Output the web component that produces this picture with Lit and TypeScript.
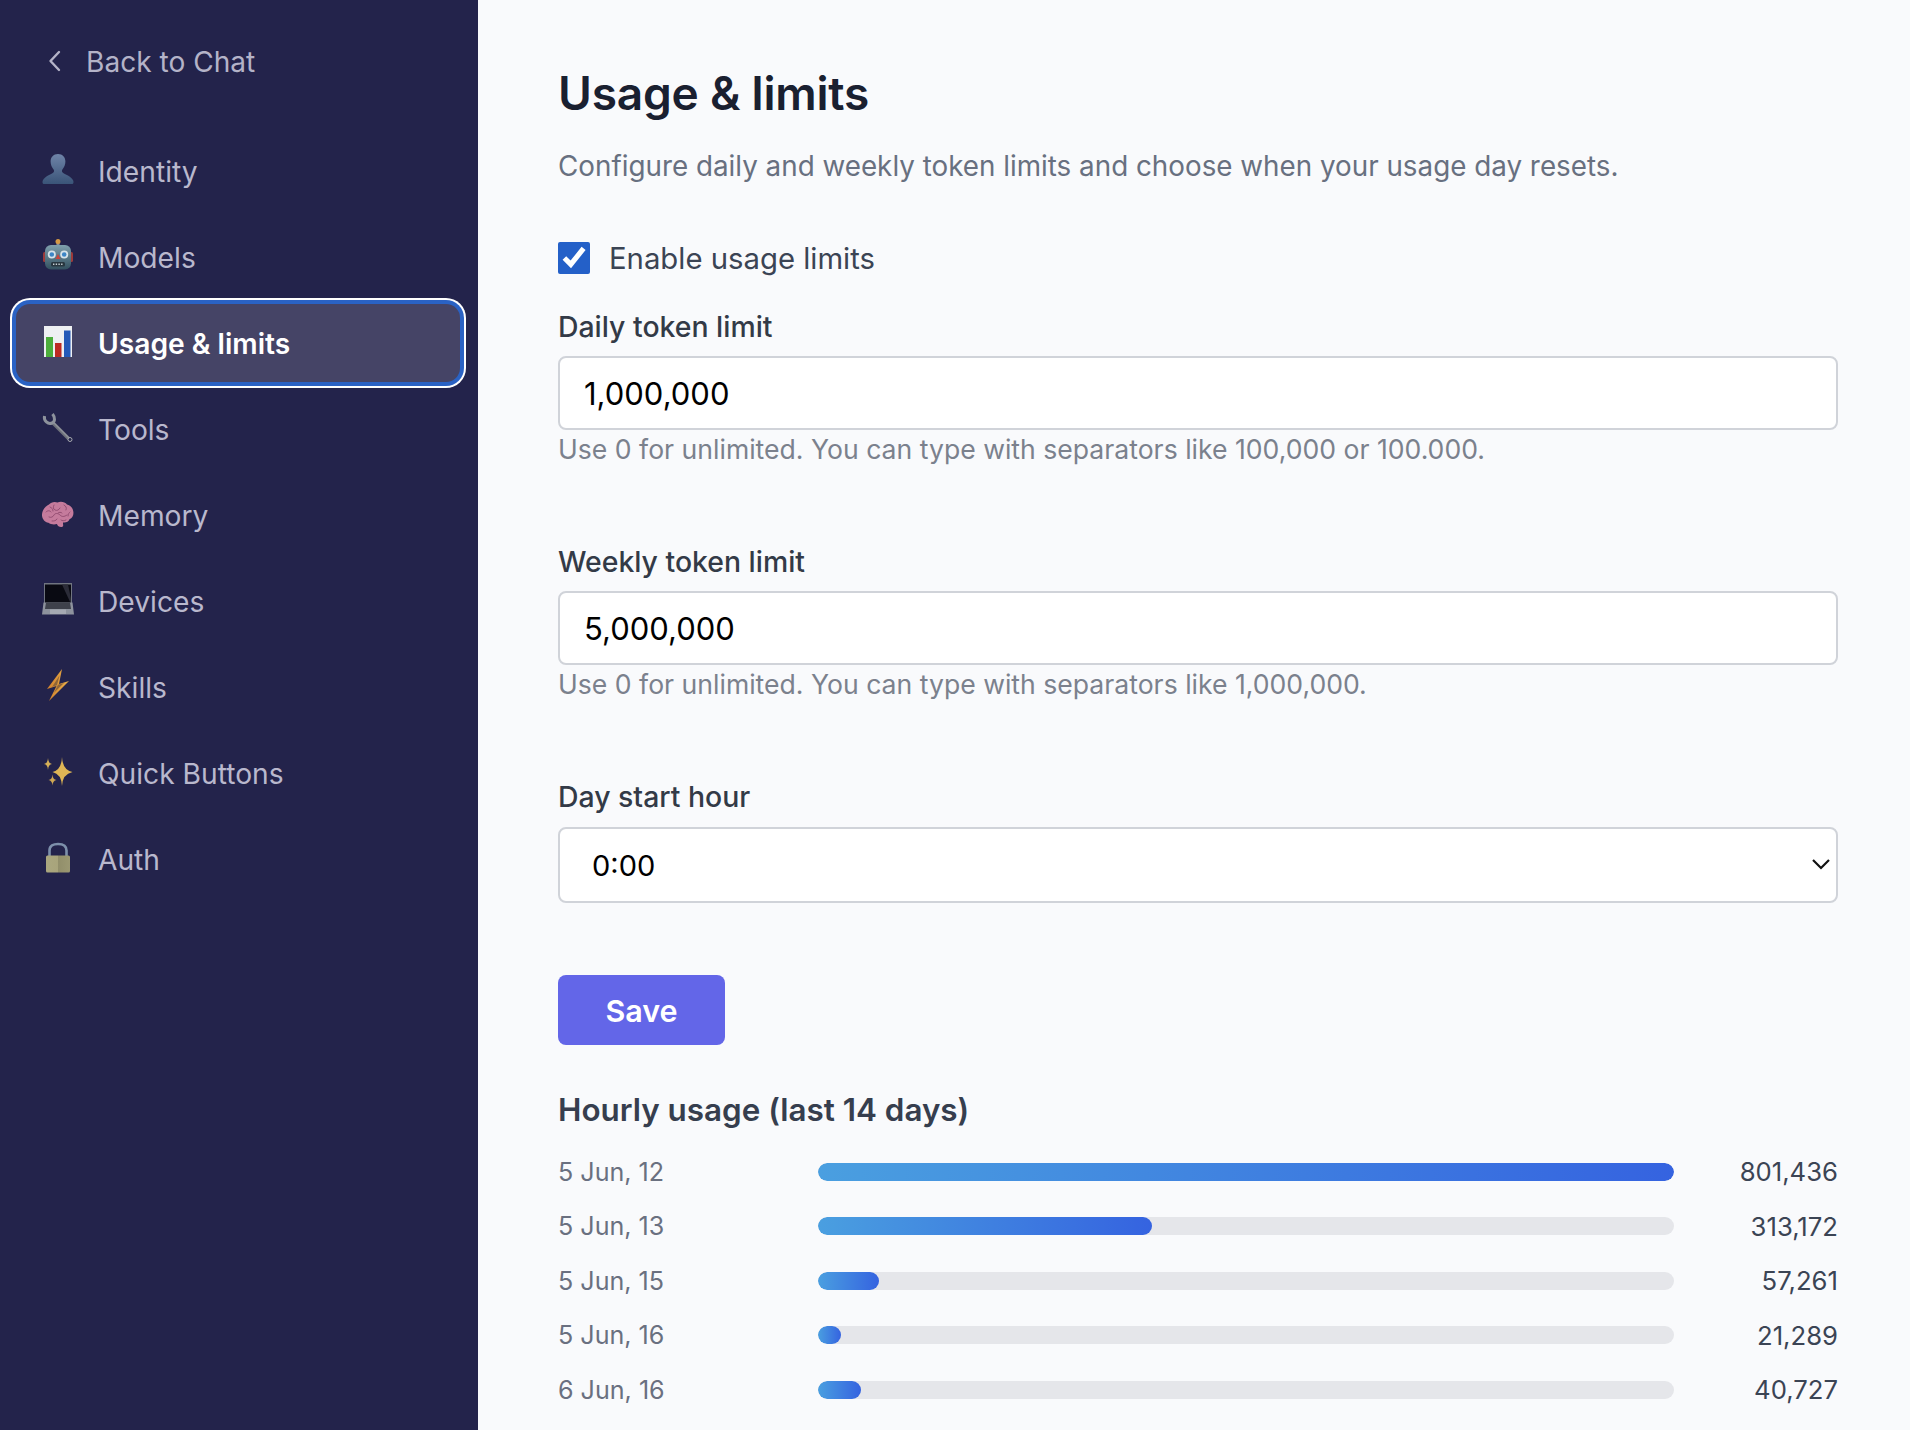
import { LitElement, html, css, svg } from "lit";
import { customElement, state } from "lit/decorators.js";

const icons: Record<string, unknown> = {
  identity: svg`<defs><linearGradient id="bust" x1="0" y1="0" x2="0" y2="1"><stop offset="0" stop-color="#6f84a8"/><stop offset="1" stop-color="#3a5478"/></linearGradient></defs>
    <path fill="url(#bust)" d="M16 1c-4.600 0-7.400 3.300-7.400 7.600 0 3.200 1.300 6 3 7.900.6.700.7 2.200-.2 3C9.300 21.300 2.800 23.300.8 27.500c-.5 1.200-.4 3.500.7 3.500h29c1.100 0 1.200-2.300.7-3.500-2-4.200-8.500-6.200-10.600-8-.9-.8-.8-2.300-.2-3 1.700-1.900 3-4.700 3-7.900C23.400 4.300 20.600 1 16 1z"/>`,
  robot: svg`<defs><linearGradient id="rb" x1="0" y1="0" x2="0" y2="1"><stop offset="0" stop-color="#7fa0ad"/><stop offset="1" stop-color="#33505f"/></linearGradient></defs>
    <rect x="14.500" y="3" width="3" height="4" fill="#8a8f96"/><circle cx="16" cy="2.500" r="2.500" fill="#d69a45"/>
    <rect x="1" y="13" width="4" height="10" rx="1.500" fill="#9c3a3a"/><rect x="27" y="13" width="4" height="10" rx="1.500" fill="#9c3a3a"/>
    <rect x="3" y="6" width="26" height="24.500" rx="6" fill="url(#rb)"/>
    <circle cx="9.800" cy="15.500" r="4" fill="#d8e4ea"/><circle cx="9.800" cy="15.500" r="2.300" fill="#3d86c6"/>
    <circle cx="22.200" cy="15.500" r="4" fill="#d8e4ea"/><circle cx="22.200" cy="15.500" r="2.300" fill="#3d86c6"/>
    <path d="M16 15l2.500 5h-5z" fill="#c8453f"/><rect x="9" y="23" width="14" height="4.500" rx="1.500" fill="#28363f"/>
    <path d="M11 25.200h10" stroke="#c6cfd3" stroke-width="1.600" stroke-dasharray="1.400 1.300"/>`,
  chart: svg`<rect x="2" y="1" width="28" height="31" fill="#eef0f2"/>
    <rect x="4" y="12" width="7" height="20" fill="#4cae3b"/><rect x="13" y="18" width="6.500" height="14" fill="#bd2a22"/><rect x="22" y="5.500" width="6.500" height="26.500" fill="#2459b8"/>`,
  wrench: svg`<path d="M10 11L27 28" stroke="#6f737c" stroke-width="3.600"/><path d="M10.500 10.500L27.500 27.500" stroke="#8f939b" stroke-width="1.200"/>
    <path d="M2.500 5C1.500 10 6 13.500 10 12 13 11 13.500 6.500 10.500 3" fill="none" stroke="#8d929c" stroke-width="3"/>
    <circle cx="28" cy="28.500" r="2" fill="#23234b" stroke="#a6a9ae" stroke-width="1"/>`,
  brain: svg`<g transform="translate(0 4)"><path fill="#c57b9c" d="M7 3.500C9 .8 13 .3 15.500 1.500 18.500.2 23 .8 25 3.500c3.300.6 5.700 3.300 6.200 6.500.8 3.500-.4 7-3.700 8.300-1 2.700-3.700 3.700-6.500 3.200-.2 1.500.9 3.300-.6 4.300-2.200 1-4.700-.5-5.500-2.700-2.500.5-6.300.5-8.500-1.300C3 21.300.3 18.300 0 14.500-.3 10 3 5 7 3.500z"/>
    <path fill="none" stroke="#8e4a6e" stroke-width=".9" stroke-linecap="round" d="M4 11c2-2 4-1.500 5 0M8 6c2 1 3 2 3 4M12 4c-1 2-1 4 1 5s4 0 5-2M22 4c2 1 3 3 2 5M7 16c2 1 4 0 5-2s4-2 6 0 4 2 7 0M28 11c-1 1-2 2-2 4M10 20c2 0 4 0 5-2M19 19c1 1 3 1 5 0M16 12c1-1 3-1 4 0"/></g>`,
  laptop: svg`<path d="M2 0h28v23H2z" fill="#707580"/><path d="M3 1.500h26V21H3z" fill="#090a12"/><path d="M20 1.500h6l3 14V21z" fill="#2b2c38"/>
    <path d="M1.500 19.500h29l1.500 12H0z" fill="#8d929d"/><path d="M4 19.500h24l1 6.500H3z" fill="#3e414b"/><rect x="8" y="26.500" width="16" height="4.500" fill="#a5a9b2"/>`,
  bolt: svg`<defs><linearGradient id="bl" x1="0" y1="0" x2="1" y2="0"><stop offset="0" stop-color="#d07f2c"/><stop offset="1" stop-color="#e9b04a"/></linearGradient></defs>
    <path d="M20 0L5 20l9.500-3L7 32 27 12l-10 3z" fill="url(#bl)"/><path d="M17.500 6.500L10 18l6-2.200-4 8L22 14l-7 2z" fill="#8f6538"/>`,
  sparkles: svg`<path d="M20 2Q20.600 15 30.500 17 20.600 19 20 31 19.400 19 10.500 17 19.400 15 20 2z" fill="#dfb655"/>
    <path d="M6 3Q6.300 8.500 10 9 6.300 9.500 6 15 5.700 9.500 2 9 5.700 8.500 6 3z" fill="#d6b058"/><path d="M10.500 19.500Q10.800 24.500 14.500 25 10.800 25.500 10.500 30.500 10.200 25.500 6.500 25 10.200 24.500 10.500 19.500z" fill="#d0a854"/>`,
  lock: svg`<defs><linearGradient id="lk" x1="0" y1="0" x2="1" y2="0"><stop offset="0" stop-color="#aaa77f"/><stop offset=".5" stop-color="#a8a47b"/><stop offset=".5" stop-color="#918e6a"/><stop offset="1" stop-color="#9b9872"/></linearGradient></defs>
    <path d="M7.500 15V9.500C7.500 4.500 11.500 3 16 3S24.500 4.500 24.500 9.500V15" fill="none" stroke="#7d90ab" stroke-width="2.600"/>
    <rect x="4" y="14.500" width="24" height="17" rx="1.500" fill="url(#lk)"/>`,
};

const navItems = [
  { icon: "identity", label: "Identity" },
  { icon: "robot", label: "Models" },
  { icon: "chart", label: "Usage & limits", active: true },
  { icon: "wrench", label: "Tools" },
  { icon: "brain", label: "Memory" },
  { icon: "laptop", label: "Devices" },
  { icon: "bolt", label: "Skills" },
  { icon: "sparkles", label: "Quick Buttons" },
  { icon: "lock", label: "Auth" },
];

const usage = [
  { label: "5 Jun, 12", value: 801436 },
  { label: "5 Jun, 13", value: 313172 },
  { label: "5 Jun, 15", value: 57261 },
  { label: "5 Jun, 16", value: 21289 },
  { label: "6 Jun, 16", value: 40727 },
];

@customElement("app-root")
export class AppRoot extends LitElement {
  @state()
  enabled = true;

  static styles = css`
    :host {
      display: flex;
      height: 100vh;
      overflow: hidden;
      font-family: Inter, "Liberation Sans", sans-serif;
      background: #f9fafc;
    }
    .sidebar {
      flex: 0 0 478px;
      box-sizing: border-box;
      background: #23234b;
      padding: 40px 18px 0 16px;
    }
    .back {
      display: flex;
      align-items: center;
      height: 42px;
      padding-left: 32px;
      gap: 25px;
      color: #b4b3c8;
      font-size: 28.100px;
      margin-bottom: 50px;
    }
    .back svg {
      width: 13px;
      height: 22px;
    }
    .back span,
    .item span {
      padding-top: 2px;
    }
    nav {
      display: flex;
      flex-direction: column;
      gap: 8px;
    }
    .item {
      display: flex;
      align-items: center;
      height: 78px;
      padding-left: 26px;
      gap: 24px;
      border-radius: 14px;
      color: #b9b8cd;
      font-size: 28.200px;
    }
    .item svg {
      width: 32px;
      height: 32px;
      margin-top: -4px;
      flex: none;
    }
    .item.active {
      background: #454466;
      color: #fff;
      font-weight: 600;
      box-shadow: 0 0 0 4px #2a62c4, 0 0 0 6px #fff;
    }
    main {
      flex: 1;
      min-width: 0;
      box-sizing: border-box;
      padding: 61px 72px 0 80px;
    }
    h1 {
      margin: 0;
      font-size: 46px;
      line-height: 64px;
      font-weight: 600;
      letter-spacing: -0.2px;
      color: #1a2030;
    }
    .sub {
      margin: 21px 0 0;
      font-size: 27.800px;
      line-height: 40px;
      color: #687080;
    }
    .check {
      display: flex;
      align-items: center;
      gap: 19px;
      height: 40px;
      margin-top: 52px;
      font-size: 29.300px;
      color: #3b4454;
    }
    .check input {
      width: 32px;
      height: 32px;
      margin: 0;
      accent-color: #2460c8;
    }
    .field {
      display: flex;
      flex-direction: column;
    }
    .field.first {
      margin-top: 29px;
    }
    .field.next {
      margin-top: 73px;
    }
    .field label {
      font-size: 28.400px;
      line-height: 40px;
      font-weight: 500;
      color: #333a47;
      margin-bottom: 9px;
    }
    .control {
      box-sizing: border-box;
      width: 100%;
      height: 74px;
      border: 2px solid #d0d3d9;
      border-radius: 8px;
      background: #fff;
      padding: 0 24px;
      font-family: inherit;
      font-size: 31px;
      color: #000;
      outline: none;
    }
    .hint {
      font-size: 26.600px;
      line-height: 40px;
      margin-top: -1px;
      color: #7b818d;
    }
    .select-wrap {
      position: relative;
      margin-top: 1px;
    }
    select.control {
      display: block;
      appearance: none;
      height: 76px;
      padding: 0 32px;
      font-size: 29px;
    }
    .select-wrap svg {
      position: absolute;
      right: 7px;
      top: 30px;
      width: 20px;
      height: 14px;
    }
    .save {
      display: block;
      width: 167px;
      height: 70px;
      margin-top: 72px;
      border: 0;
      border-radius: 8px;
      background: #6366e8;
      color: #fff;
      font-family: inherit;
      font-size: 30.500px;
      font-weight: 600;
    }
    h2 {
      margin: 45px 0 0;
      font-size: 31.400px;
      line-height: 40px;
      font-weight: 600;
      color: #363e4e;
    }
    .rows {
      margin-top: 21.500px;
      display: flex;
      flex-direction: column;
      gap: 14.500px;
    }
    .row {
      display: grid;
      grid-template-columns: 260px 856px 1fr;
      align-items: center;
      height: 40px;
      font-size: 25.100px;
      color: #6a7080;
    }
    .track {
      height: 18px;
      border-radius: 9px;
      background: #e5e6ea;
      overflow: hidden;
    }
    .fill {
      height: 100%;
      border-radius: 9px;
      background: linear-gradient(90deg, #4a9fe0, #3563e0);
    }
    .value {
      text-align: right;
      font-size: 25.700px;
      color: #3b4454;
    }
  `;

  render() {
    const max = Math.max(...usage.map((u) => u.value));
    return html`
      <aside class="sidebar">
        <div class="back">
          <svg viewBox="0 0 13 22"><path d="M11 2L2.500 11l8.500 9" fill="none" stroke="#b4b3c8" stroke-width="2.400" stroke-linecap="round" stroke-linejoin="round"/></svg>
          <span>Back to Chat</span>
        </div>
        <nav>
          ${navItems.map(
            (n) => html`
              <div class="item ${n.active ? "active" : ""}">
                <svg viewBox="0 0 32 32">${icons[n.icon]}</svg>
                <span>${n.label}</span>
              </div>
            `
          )}
        </nav>
      </aside>
      <main>
        <h1>Usage &amp; limits</h1>
        <p class="sub">Configure daily and weekly token limits and choose when your usage day resets.</p>
        <label class="check"><input type="checkbox" .checked=${this.enabled} />Enable usage limits</label>
        <div class="field first">
          <label>Daily token limit</label>
          <input class="control" .value=${"1,000,000"} />
          <div class="hint">Use 0 for unlimited. You can type with separators like 100,000 or 100.000.</div>
        </div>
        <div class="field next">
          <label>Weekly token limit</label>
          <input class="control" .value=${"5,000,000"} />
          <div class="hint">Use 0 for unlimited. You can type with separators like 1,000,000.</div>
        </div>
        <div class="field next">
          <label>Day start hour</label>
          <div class="select-wrap">
            <select class="control"><option>0:00</option></select>
            <svg viewBox="0 0 20 14"><path d="M2 3l8 8 8-8" fill="none" stroke="#111" stroke-width="2.200"/></svg>
          </div>
        </div>
        <button class="save">Save</button>
        <h2>Hourly usage (last 14 days)</h2>
        <div class="rows">
          ${usage.map(
            (u) => html`
              <div class="row">
                <span>${u.label}</span>
                <div class="track"><div class="fill" style="width:${(u.value / max) * 100}%"></div></div>
                <span class="value">${u.value.toLocaleString("en-US")}</span>
              </div>
            `
          )}
        </div>
      </main>
    `;
  }
}
